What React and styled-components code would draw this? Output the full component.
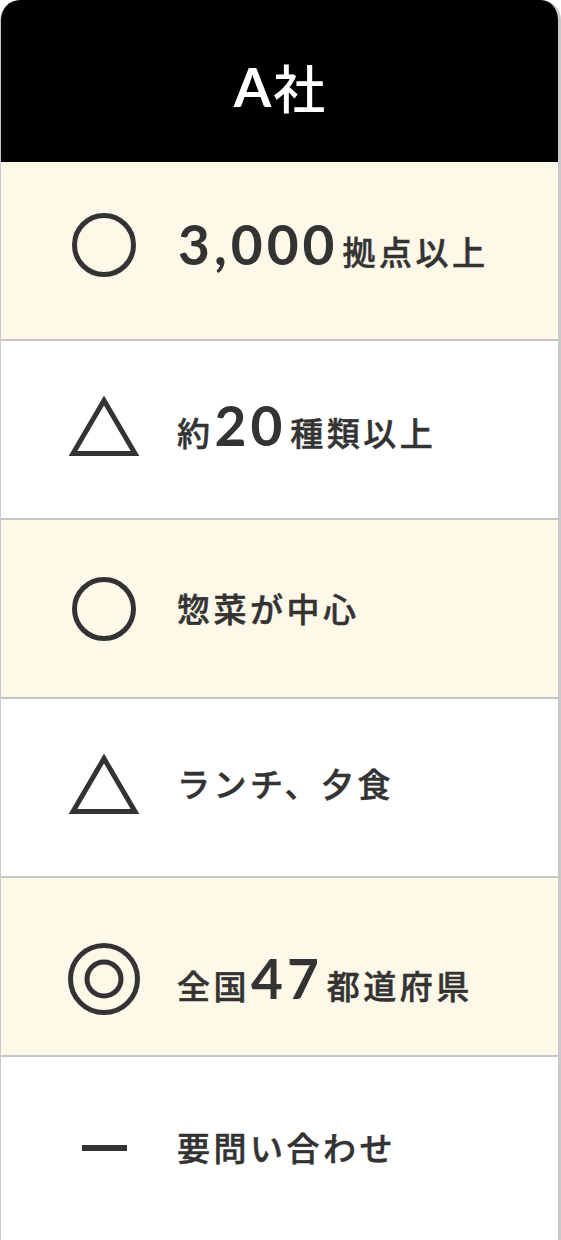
import React from "react";
import styled, { createGlobalStyle } from "styled-components";

const Global = createGlobalStyle`
  html, body { margin: 0; padding: 0; background: #fff; }
  body { font-family: "Noto Sans CJK JP", "Noto Sans", sans-serif; }
`;

const Column = styled.div`
  box-sizing: border-box;
  width: 561px;
  min-height: 1240px;
  display: flex;
  flex-direction: column;
  border-style: solid;
  border-color: #c9c9c9;
  border-width: 0 3px 0 1px;
  border-radius: 20px 20px 0 0;
  overflow: hidden;
`;

const Header = styled.div`
  height: 162px;
  box-sizing: border-box;
  padding-top: 12px;
  background: #000;
  color: #fff;
  display: flex;
  align-items: center;
  justify-content: center;
  font-family: "Lato", "Noto Sans CJK JP", sans-serif;
  font-weight: 700;
  font-size: 54px;
  line-height: 1;
`;

const Kanji = styled.span`
  font-family: "Noto Sans CJK JP", sans-serif;
  font-weight: 500;
  font-size: 52px;
  margin-left: 2px;
`;

const Row = styled.div`
  flex: ${(p) => (p.$last ? "1" : "none")};
  background: ${(p) => (p.$tint ? "#fdf8e8" : "#ffffff")};
  border-bottom: ${(p) => (p.$last ? "none" : "2px solid #c6c6c6")};
  display: flex;
  align-items: center;
  padding-left: 63px;
  padding-top: ${(p) => Math.max(0, p.$shift * 2)}px;
  padding-bottom: ${(p) => Math.max(0, -p.$shift * 2)}px;
  gap: 33px;
  box-sizing: border-box;
  min-height: ${(p) => (p.$last ? "177px" : "179px")};
  max-height: ${(p) => (p.$last ? "none" : "179px")};
`;

const IconCell = styled.div`
  width: 80px;
  height: 80px;
  display: flex;
  align-items: center;
  justify-content: center;
  flex: none;
  color: #333;
`;

const Label = styled.div`
  display: flex;
  align-items: baseline;
  color: #333;
  font-family: "Noto Sans CJK JP", sans-serif;
  font-weight: 500;
  -webkit-text-stroke: 0.5px #333;
  font-size: 33px;
  letter-spacing: 3.5px;
  line-height: 1;
  white-space: nowrap;
`;

const Num = styled.span`
  font-family: "Lato", sans-serif;
  font-weight: 700;
  -webkit-text-stroke: 0;
  font-size: 55px;
  letter-spacing: 4px;
  margin: 0 4px 0 1px;
`;

const Circle = ({ size = 64 }) => (
  <svg width={size} height={size} viewBox="0 0 64 64">
    <circle cx="32" cy="32" r="29.5" fill="none" stroke="currentColor" strokeWidth="5" />
  </svg>
);

const Triangle = () => (
  <svg width="72" height="63" viewBox="0 0 72 63" style={{ overflow: "visible" }}>
    <polygon
      points="36,6.5 5,59.5 67,59.5"
      fill="none"
      stroke="currentColor"
      strokeWidth="5"
      strokeLinejoin="miter"
    />
  </svg>
);

const DoubleCircle = () => (
  <svg width="72" height="72" viewBox="0 0 72 72">
    <circle cx="36" cy="36" r="33.5" fill="none" stroke="currentColor" strokeWidth="5" />
    <circle cx="36" cy="36" r="17" fill="none" stroke="currentColor" strokeWidth="5" />
  </svg>
);

const Dash = styled.div`
  width: 45px;
  height: 6px;
  background: #333;
`;

const icons = {
  circle: <Circle />,
  triangle: <Triangle />,
  double: <DoubleCircle />,
  dash: <Dash />,
};

const rows = [
  { icon: "circle", shift: -6, parts: [{ n: "3,000" }, { t: "拠点以上" }] },
  { icon: "triangle", shift: -4, parts: [{ t: "約" }, { n: "20" }, { t: "種類以上" }] },
  { icon: "circle", shift: 0, parts: [{ t: "惣菜が中心" }] },
  { icon: "triangle", shift: -4, parts: [{ t: "ランチ、夕食" }] },
  { icon: "double", shift: 12, parts: [{ t: "全国" }, { n: "47" }, { t: "都道府県" }] },
  { icon: "dash", shift: -1, parts: [{ t: "要問い合わせ" }] },
];

export default function App() {
  return (
    <>
      <Global />
      <Column>
        <Header>
          A<Kanji>社</Kanji>
        </Header>
        {rows.map((r, i) => (
          <Row
            key={i}
            $tint={i % 2 === 0}
            $last={i === rows.length - 1}
            $shift={r.shift}
          >
            <IconCell>{icons[r.icon]}</IconCell>
            <Label>
              {r.parts.map((p, j) =>
                p.n ? <Num key={j}>{p.n}</Num> : <span key={j}>{p.t}</span>
              )}
            </Label>
          </Row>
        ))}
      </Column>
    </>
  );
}
